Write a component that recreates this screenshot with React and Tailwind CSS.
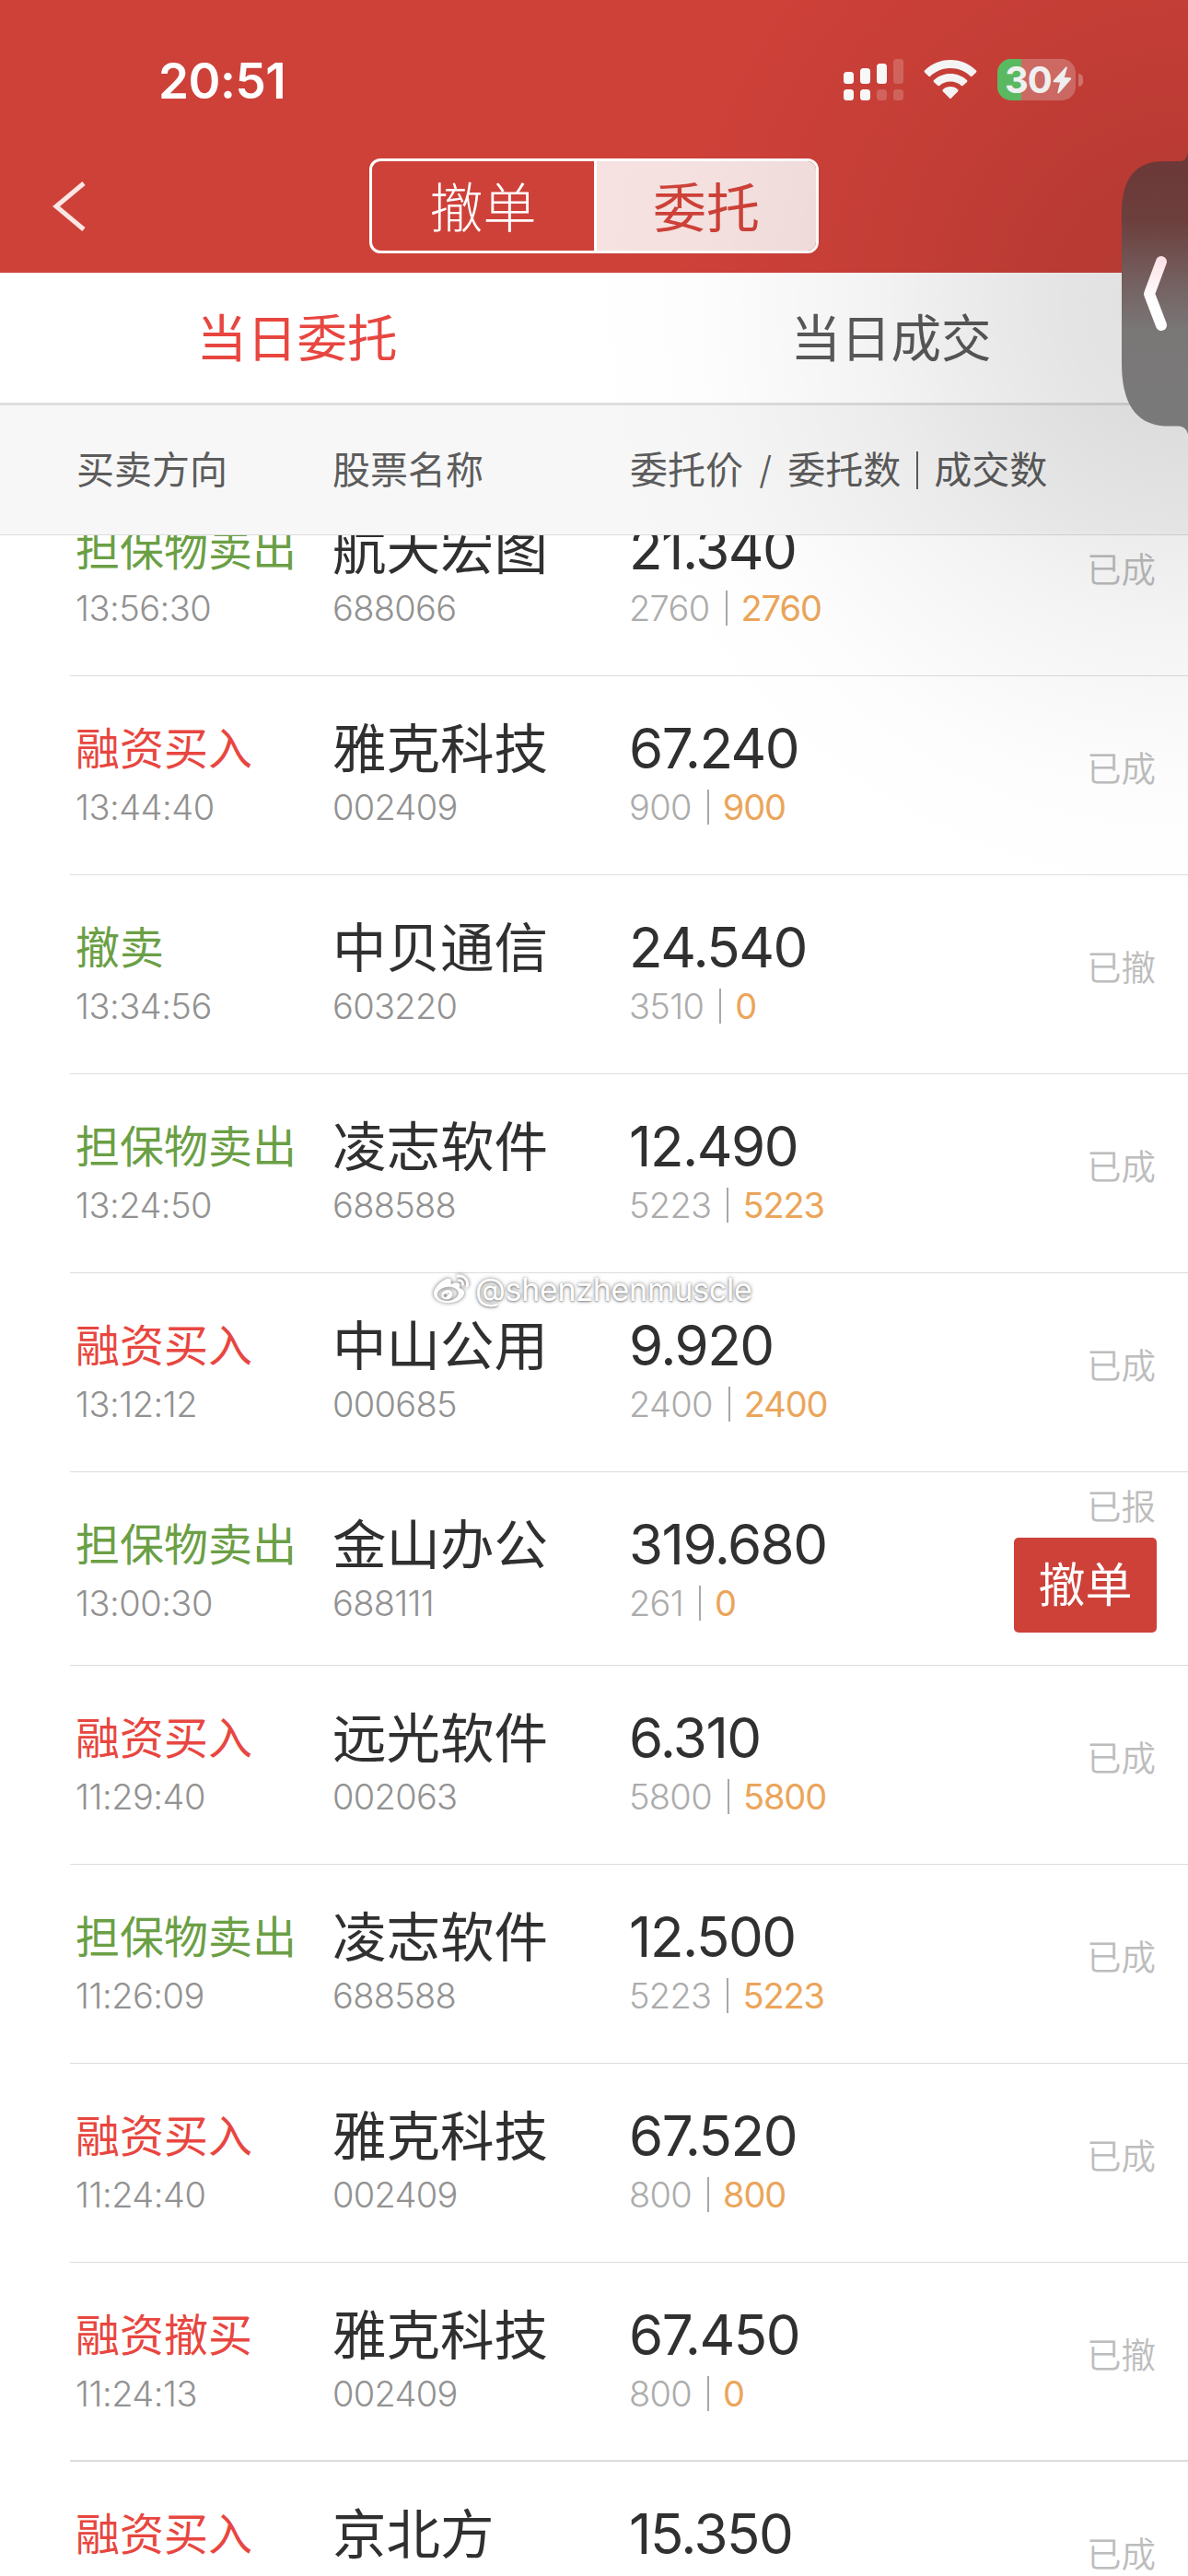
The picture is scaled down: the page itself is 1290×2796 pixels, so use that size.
import React from "react";
import { FaWeibo } from "react-icons/fa";

const orders = [
  { side: "担保物卖出", sell: true, time: "13:56:30", name: "航天宏图", code: "688066", price: "21.340", qty: "2760", done: "2760", status: "已成" },
  { side: "融资买入", time: "13:44:40", name: "雅克科技", code: "002409", price: "67.240", qty: "900", done: "900", status: "已成" },
  { side: "撤卖", sell: true, time: "13:34:56", name: "中贝通信", code: "603220", price: "24.540", qty: "3510", done: "0", status: "已撤" },
  { side: "担保物卖出", sell: true, time: "13:24:50", name: "凌志软件", code: "688588", price: "12.490", qty: "5223", done: "5223", status: "已成" },
  { side: "融资买入", time: "13:12:12", name: "中山公用", code: "000685", price: "9.920", qty: "2400", done: "2400", status: "已成" },
  { side: "担保物卖出", sell: true, time: "13:00:30", name: "金山办公", code: "688111", price: "319.680", qty: "261", done: "0", status: "已报", cancelable: true },
  { side: "融资买入", time: "11:29:40", name: "远光软件", code: "002063", price: "6.310", qty: "5800", done: "5800", status: "已成" },
  { side: "担保物卖出", sell: true, time: "11:26:09", name: "凌志软件", code: "688588", price: "12.500", qty: "5223", done: "5223", status: "已成" },
  { side: "融资买入", time: "11:24:40", name: "雅克科技", code: "002409", price: "67.520", qty: "800", done: "800", status: "已成" },
  { side: "融资撤买", time: "11:24:13", name: "雅克科技", code: "002409", price: "67.450", qty: "800", done: "0", status: "已撤", last: true },
  { side: "融资买入", name: "京北方", price: "15.350", status: "已成" },
];

function StatusBar() {
  return (
    <div className="flex h-[172px] items-start justify-between pl-[172px] pr-[114px]">
      <div className="mt-[58px] text-[53px] leading-[60px] font-semibold tracking-[-0.5px]">20:51</div>
      <div className="mt-[64px] flex items-start">
        <svg width="66" height="46" viewBox="0 0 66 46" fill="currentColor">
          <rect x="0" y="14" width="11" height="13" rx="3.5" />
          <rect x="18" y="10" width="11" height="17" rx="3.5" />
          <rect x="36" y="5" width="11" height="22" rx="3.5" />
          <rect x="54" y="0" width="11" height="27" rx="3.5" opacity="0.2" />
          <rect x="0" y="33" width="11" height="12" rx="3.5" />
          <rect x="18" y="33" width="11" height="12" rx="3.5" />
          <rect x="36" y="33" width="11" height="12" rx="3.5" opacity="0.2" />
          <rect x="54" y="33" width="11" height="12" rx="3.5" opacity="0.2" />
        </svg>
        <svg className="ml-[21px]" width="60" height="46" viewBox="0 0 60 46" fill="currentColor">
          <path d="M29 1C18 1 8 5.400 1 12.600Q.2 13.600 1 14.600L5.400 18.800Q6.300 19.500 7.200 18.700C13 13.200 20.600 10 29 10S45 13.200 50.800 18.700Q51.700 19.500 52.600 18.800L57 14.600Q57.800 13.600 57 12.600C50 5.400 40 1 29 1Z" />
          <path d="M29 16C22 16 15.600 18.700 11 23Q10.200 24 11 24.900L15.400 29Q16.300 29.700 17.200 29C20.300 26.300 24.400 24.600 29 24.600S37.700 26.300 40.800 29Q41.700 29.700 42.600 29L47 24.900Q47.800 24 47 23C42.400 18.700 36 16 29 16Z" />
          <path d="M29 30C25.800 30 23 31.200 20.900 33.200Q20 34.200 20.900 35.200L28 42.500Q29 43.500 30 42.500L37.100 35.200Q38 34.200 37.100 33.200C35 31.200 32.200 30 29 30Z" />
        </svg>
        <div className="ml-[20px] flex items-center">
          <div className="relative flex h-[45px] w-[85px] items-center rounded-[15px] bg-white/25">
            <div className="absolute inset-y-0 left-0 w-[26px] rounded-l-[15px] bg-[#5fc466]" />
            <span className="relative ml-[8px] text-[40px] leading-[45px] font-bold tracking-[-1px]">30</span>
            <svg className="absolute left-[60px] top-[8px]" width="21" height="30" viewBox="0 0 21 30" fill="currentColor">
              <path d="M14.500 .5 .8 15.500Q0 17 1.500 17.200L8 17.600 5.300 28.500Q5.500 30 7 29L20 14Q20.800 12.500 19.300 12.300L12.800 11.900 15.800 1.500Q15.800 0 14.500 .5Z" />
            </svg>
          </div>
          <div className="ml-[3px] h-[14px] w-[5px] rounded-r-full bg-white/30" />
        </div>
      </div>
    </div>
  );
}

function Row({ order }) {
  const { side, sell, time, name, code, price, qty, done, status, cancelable, last } = order;
  return (
    <div
      className={
        "ml-[76px] flex shrink-0 border-[#dcdcdc] pl-[6px] " +
        (cancelable ? "h-[210px] " : "h-[216px] ") +
        (last ? "border-b-2" : "border-b")
      }
    >
      <div className="w-[279px] pt-[49px]">
        <div className={"text-[48px] leading-[60px] whitespace-nowrap " + (sell ? "text-[#6b9f45]" : "text-[#e84640]")}>{side}</div>
        <div className="mt-[10px] text-[38px] leading-[46px] font-[350] tracking-[-0.5px] text-[#929292]">{time}</div>
      </div>
      <div className="w-[322px] pt-[49px]">
        <div className="text-[58.500px] leading-[60px] whitespace-nowrap">{name}</div>
        <div className="mt-[10px] text-[38px] leading-[46px] font-[350] tracking-[-0.7px] text-[#929292]">{code}</div>
      </div>
      <div className="flex-1 pt-[48px]">
        <div className="text-[60px] leading-[60px] font-[380] tracking-[-1.5px]">{price}</div>
        {qty && (
          <div className="mt-[11px] flex items-center text-[38px] leading-[46px] font-[350] tracking-[-0.7px] text-[#acacac]">
            {qty}
            <span className="mr-[15px] ml-[17px] h-[38px] w-[2px] bg-[#a8a8a8]" />
            <span className="font-normal tracking-[-1.1px] text-[#eba55a]">{done}</span>
          </div>
        )}
      </div>
      <div className={"flex flex-col items-end pr-[34px] " + (cancelable ? "pt-[18px]" : "pt-[81px]")}>
        <div className="mr-[1px] text-[37.500px] leading-[40px] font-[350] text-[#bdbdbd]">{status}</div>
        {cancelable && (
          <button className="mt-[13px] h-[103px] w-[155px] rounded-[5px] bg-[#ce4139] text-[51px] leading-[103px] text-white">撤单</button>
        )}
      </div>
    </div>
  );
}

export default function App() {
  return (
    <div className="relative flex h-[2796px] w-[1290px] flex-col overflow-hidden bg-white font-['Inter','Noto_Sans_CJK_SC',sans-serif] text-[#303030]">
      <header className="h-[296px] shrink-0 bg-[#ce4139] text-white">
        <StatusBar />
        <div className="flex h-[103px] items-center">
          <svg className="ml-[56px]" width="40" height="54" viewBox="0 0 40 54" fill="none" stroke="#fbe6e4" strokeWidth="5">
            <path d="M35 2 5 27 35 52" />
          </svg>
          <div className="ml-[305px] flex h-[103px] w-[488px] overflow-hidden rounded-[12px] border-[3px] border-white text-[58px] leading-[103px]">
            <button className="flex h-full w-[241px] items-center justify-center pt-[5px] font-light">撤单</button>
            <button className="flex h-full flex-1 items-center justify-center border-l-[3px] border-white bg-[#f6e2e1] pt-[5px] text-[#ce4139]">委托</button>
          </div>
        </div>
      </header>

      <nav className="flex h-[144px] shrink-0 border-b-[3px] border-[#dedede] text-[54.500px] leading-[142px]">
        <button className="flex-1 text-[#e84640]">当日委托</button>
        <button className="flex-1 text-[#5a5a5a]">当日成交</button>
      </nav>

      <div className="flex h-[141px] shrink-0 border-b border-[#dcdcdc] bg-[#f7f7f7] pl-[83px] text-[41px] leading-[140px] text-[#5c5c5c]">
        <div className="w-[278px]">买卖方向</div>
        <div className="w-[323px]">股票名称</div>
        <div className="flex items-center">
          委托价
          <span className="mx-[17px] font-light">/</span>
          委托数
          <span className="mx-[17px] h-[41px] w-[2px] bg-[#5c5c5c]" />
          成交数
        </div>
      </div>

      {/* list is scrolled, so the first row is cut by the table head */}
      <main className="min-h-0 flex-1 overflow-hidden">
        <div className="-mt-[63px] flex flex-col">
          {orders.map((order, i) => (
            <Row key={i} order={order} />
          ))}
        </div>
      </main>

      <div className="absolute left-[469px] top-[1381px] flex items-center text-white">
        <FaWeibo className="h-[38px] w-[42px] drop-shadow-[0_0_2px_rgba(0,0,0,0.6)]" />
        <span className="ml-[5px] text-[34px] leading-[38px] tracking-[-0.3px] [text-shadow:0_0_4px_rgba(0,0,0,0.5),0_1px_2px_rgba(0,0,0,0.3)]">@shenzhenmuscle</span>
      </div>

      {/* floating side handle and its soft shadow */}
      <div className="pointer-events-none absolute right-0 top-0 h-[1100px] w-[700px] bg-[radial-gradient(circle_660px_at_100%_330px,rgba(0,0,0,0.12),rgba(0,0,0,0.106)_20%,rgba(0,0,0,0.07)_40%,rgba(0,0,0,0.046)_52%,rgba(0,0,0,0.026)_66%,rgba(0,0,0,0.009)_82%,transparent)]" />
      <svg className="absolute right-0 top-[160px]" width="72" height="320" viewBox="0 0 72 320" fill="none">
        <defs>
          <linearGradient id="handle" x1="0" y1="0" x2="0" y2="320" gradientUnits="userSpaceOnUse">
            <stop offset="0.05" stopColor="#6b3937" />
            <stop offset="0.25" stopColor="#6c3f3d" />
            <stop offset="0.45" stopColor="#745f5f" />
            <stop offset="0.62" stopColor="#7a7777" />
            <stop offset="1" stopColor="#7a7a7a" />
          </linearGradient>
          <linearGradient id="arrow" x1="0" y1="118" x2="0" y2="200" gradientUnits="userSpaceOnUse">
            <stop stopColor="#fbe0e5" />
            <stop offset="0.6" stopColor="#fff" />
          </linearGradient>
        </defs>
        <path d="M72 5Q71 15 63 15H46C16 15 0 32 0 72V234C0 276 14 300 46 302.500H62Q70 303 72 311Z" fill="url(#handle)" />
        <path d="M43 124 30 159 43 193" stroke="url(#arrow)" strokeWidth="12" strokeLinecap="round" strokeLinejoin="round" />
      </svg>
    </div>
  );
}
